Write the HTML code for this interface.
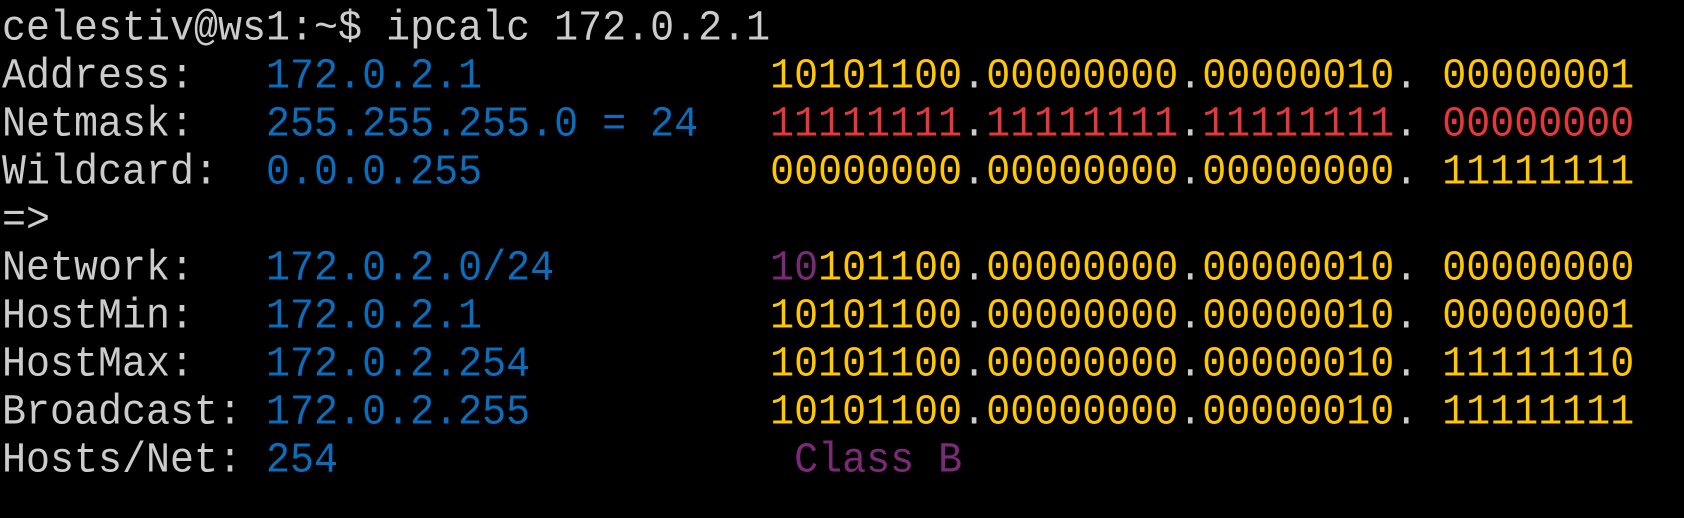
<!DOCTYPE html>
<html><head><meta charset="utf-8"><style>
html,body{margin:0;background:#000;width:1684px;height:518px;overflow:hidden}
pre{margin:0;padding:7px 0 0 2px;font-family:"Liberation Mono",monospace;font-size:40px;line-height:48px;color:#cccccc;white-space:pre}
.l{display:block;height:48px;transform:scaleY(1.06);transform-origin:50% 80%}
.b{color:#0a6ebd}.y{color:#ffc700}.r{color:#e5383b}.p{color:#7b2a78}.g{color:#cccccc}
</style></head><body><pre><span class="l">celestiv@ws1:~$ ipcalc 172.0.2.1</span><span class="l">Address:   <span class="b">172.0.2.1</span>            <span class="y">10101100</span>.<span class="y">00000000</span>.<span class="y">00000010</span>. <span class="y">00000001</span></span><span class="l">Netmask:   <span class="b">255.255.255.0 = 24</span>   <span class="r">11111111</span>.<span class="r">11111111</span>.<span class="r">11111111</span>. <span class="r">00000000</span></span><span class="l">Wildcard:  <span class="b">0.0.0.255</span>            <span class="y">00000000</span>.<span class="y">00000000</span>.<span class="y">00000000</span>. <span class="y">11111111</span></span><span class="l">=&gt;</span><span class="l">Network:   <span class="b">172.0.2.0/24</span>         <span class="p">10</span><span class="y">101100</span>.<span class="y">00000000</span>.<span class="y">00000010</span>. <span class="y">00000000</span></span><span class="l">HostMin:   <span class="b">172.0.2.1</span>            <span class="y">10101100</span>.<span class="y">00000000</span>.<span class="y">00000010</span>. <span class="y">00000001</span></span><span class="l">HostMax:   <span class="b">172.0.2.254</span>          <span class="y">10101100</span>.<span class="y">00000000</span>.<span class="y">00000010</span>. <span class="y">11111110</span></span><span class="l">Broadcast: <span class="b">172.0.2.255</span>          <span class="y">10101100</span>.<span class="y">00000000</span>.<span class="y">00000010</span>. <span class="y">11111111</span></span><span class="l">Hosts/Net: <span class="b">254</span>                   <span class="p">Class B</span></span></pre></body></html>
